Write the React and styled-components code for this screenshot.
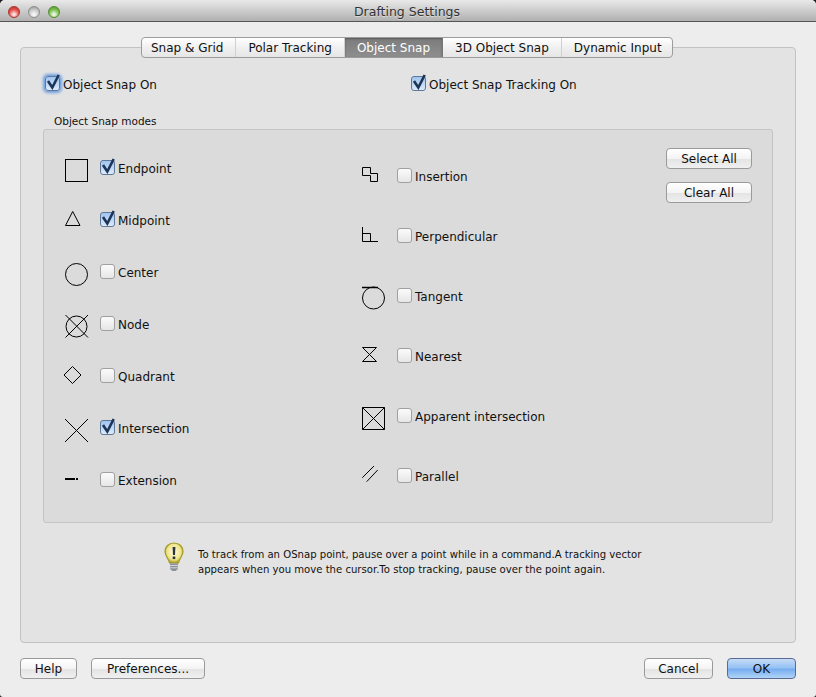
import React from 'react';
import styled, { createGlobalStyle, css } from 'styled-components';

const GlobalStyle = createGlobalStyle`
  html, body {
    margin: 0;
    padding: 0;
    background: #1c1c1c;
  }
  body {
    font-family: "DejaVu Sans", "Liberation Sans", sans-serif;
    font-size: 12px;
    color: #111;
  }
`;

const leftModes = [
  { name: 'Endpoint', icon: 'endpoint', checked: true },
  { name: 'Midpoint', icon: 'midpoint', checked: true },
  { name: 'Center', icon: 'center' },
  { name: 'Node', icon: 'node' },
  { name: 'Quadrant', icon: 'quadrant' },
  { name: 'Intersection', icon: 'intersection', checked: true },
  { name: 'Extension', icon: 'extension' },
];

const rightModes = [
  { name: 'Insertion', icon: 'insertion' },
  { name: 'Perpendicular', icon: 'perpendicular' },
  { name: 'Tangent', icon: 'tangent' },
  { name: 'Nearest', icon: 'nearest' },
  { name: 'Apparent intersection', icon: 'apparent' },
  { name: 'Parallel', icon: 'parallel' },
];

const tabs = ['Snap & Grid', 'Polar Tracking', 'Object Snap', '3D Object Snap', 'Dynamic Input'];

function SnapIcon({ type }) {
  const shapes = {
    endpoint: <rect x="0.5" y="3.5" width="22" height="22" />,
    midpoint: <path d="M0.5 17.5H15L7.7 3.5Z" />,
    center: <circle cx="11.5" cy="14.5" r="11" />,
    node: (
      <>
        <circle cx="11.5" cy="14.5" r="10.5" />
        <path d="M0.5 3L23 25.5M23 3L0.5 25.5" />
      </>
    ),
    quadrant: <path d="M7.5 2.5L16 11L7.5 19.5L-1 11Z" />,
    intersection: <path d="M0 3L23 26M23 3L0 26" />,
    extension: (
      <>
        <path d="M0 11H10" strokeWidth="2" />
        <path d="M11 11H13" strokeWidth="2" />
      </>
    ),
    insertion: <path d="M1.5 3.5H9.5V9.5H16.5V17.5H9.5V11.5H1.5Z" />,
    perpendicular: <path d="M1.5 3V17.5H17M1.5 9.5H9.5V17.5" />,
    tangent: (
      <>
        <path d="M1 3.5H17" strokeWidth="1.5" />
        <circle cx="12.5" cy="14" r="11" />
      </>
    ),
    nearest: <path d="M1.5 3.5H15.5L1.5 17.5H15.5Z" />,
    apparent: <path d="M1.5 3.5H23.5V25.5H1.5ZM1.5 3.5L23.5 25.5M23.5 3.5L1.5 25.5" />,
    parallel: <path d="M1.3 13.7L13 2M5.7 17.7L16.7 6" />,
  };
  return (
    <IconSvg viewBox="0 0 26 26" fill="none" stroke="#000" strokeWidth="1">
      {shapes[type]}
    </IconSvg>
  );
}

function CheckBox({ checked, focused, label }) {
  return (
    <CheckLabel>
      <Box $checked={checked} $focused={focused}>
        {checked && (
          <svg width="16" height="17" viewBox="0 0 16 17">
            <path d="M3 8L7.3 14.5L13.7 2" fill="none" stroke="#1d3557" strokeWidth="2.6" />
          </svg>
        )}
      </Box>
      <span>{label}</span>
    </CheckLabel>
  );
}

function ModeColumn({ modes, $right }) {
  return (
    <Column $right={$right}>
      {modes.map((mode) => (
        <ModeRow key={mode.name} $right={$right}>
          <IconSlot $right={$right}>
            <SnapIcon type={mode.icon} />
          </IconSlot>
          <CheckBox checked={mode.checked} label={mode.name} />
        </ModeRow>
      ))}
    </Column>
  );
}

function Bulb() {
  return (
    <BulbSvg viewBox="0 0 20 30">
      <defs>
        <radialGradient id="bulbGlow" cx="50%" cy="45%" r="55%">
          <stop offset="0%" stopColor="#fdfbe0" />
          <stop offset="70%" stopColor="#efe58a" />
          <stop offset="100%" stopColor="#a89a20" />
        </radialGradient>
      </defs>
      <path
        d="M10 1C4.5 1 1 4.8 1 9.5C1 14 4.5 16 5.5 21H14.5C15.5 16 19 14 19 9.5C19 4.8 15.5 1 10 1Z"
        fill="url(#bulbGlow)"
        stroke="#a39a2a"
        strokeWidth="1.2"
      />
      <path d="M8.6 5H11.4L11 13H9Z" fill="#2c3440" />
      <rect x="8.7" y="14.5" width="2.6" height="2.6" fill="#2c3440" />
      <path d="M6 21.5H14V27L11.5 29H8.5L6 27Z" fill="#8b8f9a" />
      <path d="M6 23.5H14M6 25.8H14" stroke="#d4d6dc" strokeWidth="1" />
    </BulbSvg>
  );
}

export default function App() {
  return (
    <>
      <GlobalStyle />
      <Window>
        <TitleBar>
          <Lights>
            <Light $color="#e8504a" $edge="#a8322e" />
            <Light $color="#c8c8c8" $edge="#8e8e8e" />
            <Light $color="#7cc04e" $edge="#528c2e" />
          </Lights>
          <Title>Drafting Settings</Title>
        </TitleBar>
        <Body>
          <TabBar>
            {tabs.map((tab) => (
              <Tab key={tab} $active={tab === 'Object Snap'}>
                {tab}
              </Tab>
            ))}
          </TabBar>
          <Panel>
            <TopChecks>
              <TopCheck $width="364px">
                <CheckBox checked focused label="Object Snap On" />
              </TopCheck>
              <TopCheck>
                <CheckBox checked label="Object Snap Tracking On" />
              </TopCheck>
            </TopChecks>
            <GroupTitle>Object Snap modes</GroupTitle>
            <Group>
              <ModeColumn modes={leftModes} />
              <ModeColumn modes={rightModes} $right />
              <SideButtons>
                <PushButton $width="86px">Select All</PushButton>
                <PushButton $width="86px">Clear All</PushButton>
              </SideButtons>
            </Group>
            <Tip>
              <Bulb />
              <TipText>
                To track from an OSnap point, pause over a point while in a command.A tracking vector
                <br />
                appears when you move the cursor.To stop tracking, pause over the point again.
              </TipText>
            </Tip>
          </Panel>
          <Footer>
            <ButtonGroup>
              <PushButton $width="57px">Help</PushButton>
              <PushButton $width="114px">Preferences...</PushButton>
            </ButtonGroup>
            <ButtonGroup>
              <PushButton $width="69px">Cancel</PushButton>
              <PushButton $width="69px" $primary>
                OK
              </PushButton>
            </ButtonGroup>
          </Footer>
        </Body>
      </Window>
    </>
  );
}

const Window = styled.div`
  width: 816px;
  height: 697px;
  display: flex;
  flex-direction: column;
  background: #ededed;
  border-radius: 5px 5px 3px 3px;
  overflow: hidden;
`;

const TitleBar = styled.div`
  height: 21px;
  flex: none;
  display: flex;
  align-items: center;
  justify-content: center;
  position: relative;
  background: linear-gradient(#e9e9e9, #d2d2d2 40%, #b0b0b0);
  border-bottom: 1px solid #555;
`;

const Lights = styled.div`
  position: absolute;
  left: 8px;
  top: 6px;
  display: flex;
  gap: 8px;
`;

const Light = styled.span`
  width: 12px;
  height: 12px;
  border-radius: 50%;
  box-sizing: border-box;
  border: 1px solid ${(p) => p.$edge};
  background: radial-gradient(circle at 50% 75%, #fff 0%, ${(p) => p.$color} 55%, ${(p) => p.$edge} 100%);
`;

const Title = styled.div`
  font-size: 12.5px;
  color: #333;
  margin-left: -2px;
  padding-top: 1px;
  text-shadow: 0 1px 0 rgba(255, 255, 255, 0.45);
`;

const Body = styled.div`
  flex: 1;
  display: flex;
  flex-direction: column;
  padding: 15px 20px 0;
`;

const TabBar = styled.div`
  display: flex;
  align-self: flex-start;
  margin-left: 121px;
  height: 21px;
  box-sizing: border-box;
  border: 1px solid #9c9c9c;
  border-radius: 4px;
  background: linear-gradient(#ffffff, #f0f0f0 50%, #e6e6e6);
  position: relative;
  z-index: 1;
  margin-bottom: -11px;
  overflow: hidden;
`;

const Tab = styled.div`
  display: flex;
  align-items: center;
  padding: 0 12px;
  font-size: 12px;
  white-space: nowrap;
  color: #111;
  border-right: 1px solid #d0d0d0;
  &:first-child {
    padding-left: 9px;
  }
  &:last-child {
    border-right: none;
    padding-right: 10px;
  }
  ${(p) =>
    p.$active &&
    css`
      background: linear-gradient(#7c7c7c, #8e8e8e);
      color: #fff;
      border-right-color: #777;
      box-shadow: inset 0 1px 2px rgba(0, 0, 0, 0.3);
    `}
`;

const Panel = styled.div`
  height: 596px;
  box-sizing: border-box;
  flex: none;
  background: #e3e3e3;
  border: 1px solid #c2c2c2;
  border-radius: 4px;
  padding: 0 22px;
  display: flex;
  flex-direction: column;
`;

const TopChecks = styled.div`
  display: flex;
  padding-top: 28px;
  height: 20px;
  margin-bottom: 18px;
`;

const TopCheck = styled.div`
  width: ${(p) => p.$width || 'auto'};
  padding-left: 2px;
`;

const GroupTitle = styled.div`
  font-size: 10.5px;
  line-height: 14px;
  margin-left: 11px;
  margin-bottom: 1px;
`;

const Group = styled.div`
  height: 394px;
  box-sizing: border-box;
  flex: none;
  display: flex;
  background: #dbdbdb;
  border: 1px solid #c4c4c4;
  border-radius: 3px;
  padding: 13px 20px 0 21px;
`;

const Column = styled.div`
  width: 296px;
  display: flex;
  flex-direction: column;
  ${(p) =>
    p.$right &&
    css`
      width: 305px;
      padding-top: 4px;
    `}
`;

const ModeRow = styled.div`
  height: ${(p) => (p.$right ? '60px' : '52px')};
  display: flex;
  align-items: center;
`;

const IconSlot = styled.div`
  width: ${(p) => (p.$right ? '36px' : '35px')};
  display: flex;
  align-items: center;
`;

const IconSvg = styled.svg`
  width: 26px;
  height: 26px;
  display: block;
  overflow: visible;
`;

const CheckLabel = styled.label`
  display: flex;
  align-items: center;
  gap: 3px;
  font-size: 12px;
  line-height: 16px;
  white-space: nowrap;
`;

const Box = styled.span`
  width: 15px;
  height: 15px;
  flex: none;
  box-sizing: border-box;
  margin-bottom: 3px;
  border: 1px solid #a0a0a0;
  border-radius: 3px;
  position: relative;
  background: linear-gradient(#fbfbfb, #e6e6e6);
  ${(p) =>
    p.$checked &&
    css`
      border-color: #5f7798;
      background: linear-gradient(#a0c4f0, #dcebfb);
    `}
  ${(p) =>
    p.$focused &&
    css`
      box-shadow: 0 0 3px 2px #6f9fe0;
    `}
  svg {
    position: absolute;
    left: -1px;
    top: -4px;
  }
`;

const SideButtons = styled.div`
  display: flex;
  flex-direction: column;
  gap: 13px;
  padding-top: 5px;
`;

const PushButton = styled.button`
  width: ${(p) => p.$width};
  height: 21px;
  padding: 0;
  box-sizing: border-box;
  font-family: inherit;
  font-size: 12px;
  color: #111;
  border: 1px solid #9a9a9a;
  border-radius: 4px;
  background: linear-gradient(#ffffff, #f4f4f4 50%, #e4e4e4 55%, #f0f0f0);
  ${(p) =>
    p.$primary &&
    css`
      border-color: #5a6a94;
      background: linear-gradient(#c6dcf6, #97c2f4 45%, #78aef0 55%, #b0d4f8);
    `}
`;

const Tip = styled.div`
  display: flex;
  align-items: flex-start;
  margin: 19px 0 0 121px;
  gap: 14px;
`;

const BulbSvg = styled.svg`
  width: 20px;
  height: 30px;
  flex: none;
`;

const TipText = styled.div`
  font-size: 10.1px;
  line-height: 15px;
  margin-top: 5px;
  white-space: nowrap;
`;

const Footer = styled.div`
  display: flex;
  justify-content: space-between;
  margin-top: 15px;
`;

const ButtonGroup = styled.div`
  display: flex;
  gap: 14px;
`;
